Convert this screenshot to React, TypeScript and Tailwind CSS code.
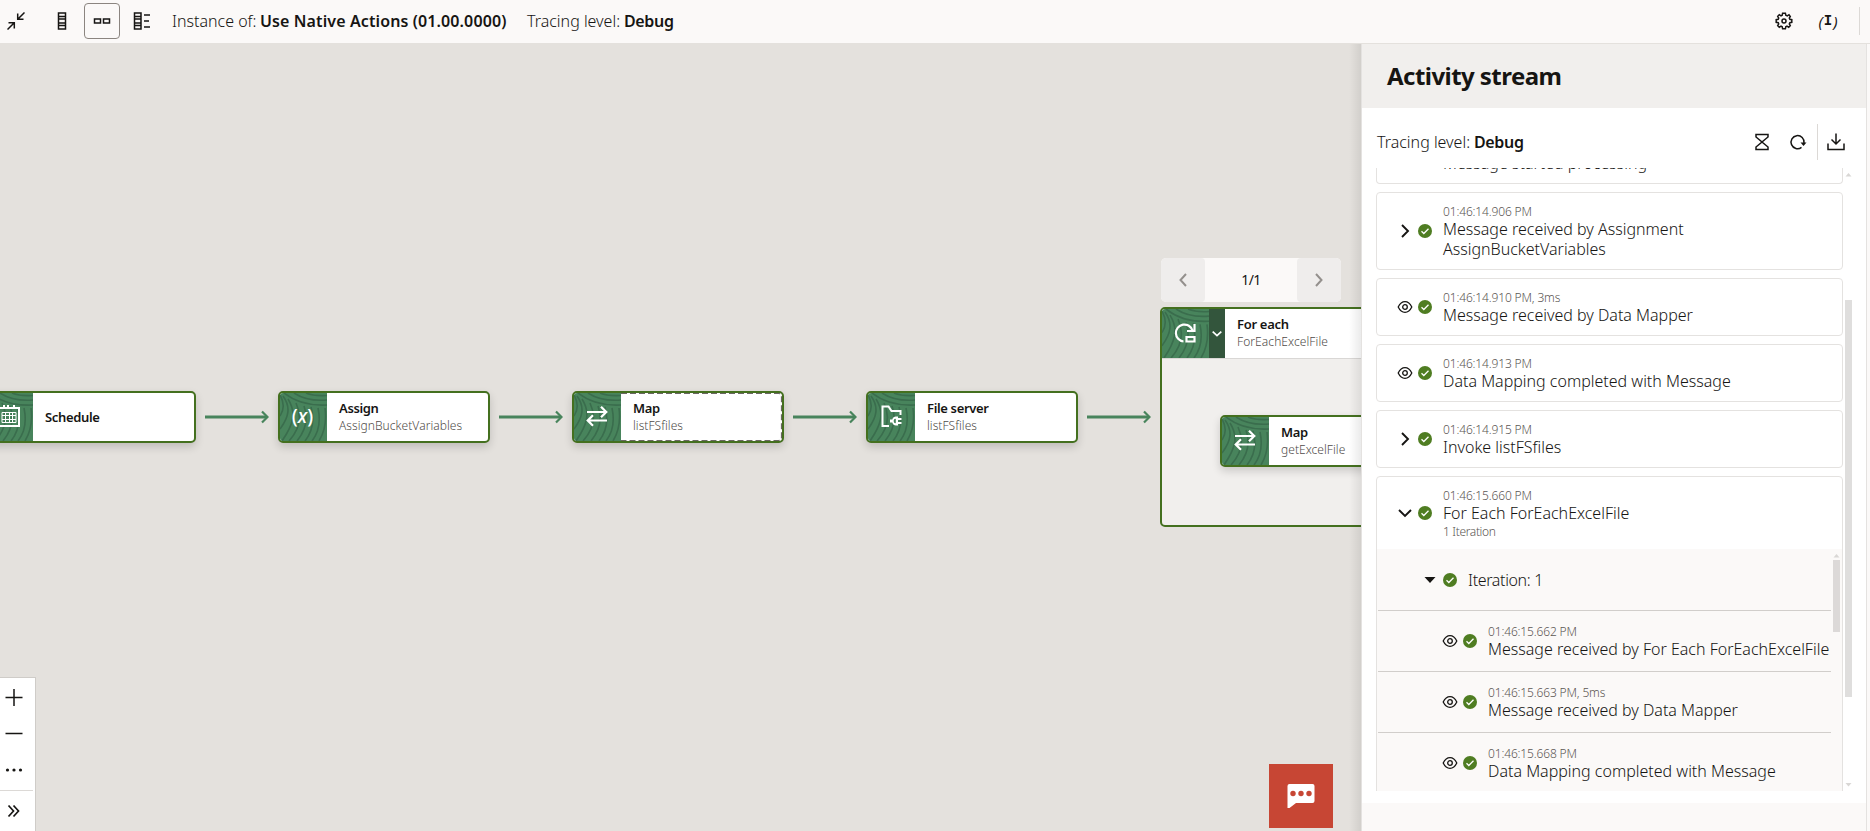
import type { ReactNode } from "react";

function Texture() {
  return (
    <svg className="absolute inset-0 h-full w-full" viewBox="0 0 47 48" preserveAspectRatio="none" fill="none" stroke="#3a6d4d" strokeWidth="1.6">
      <path d="M4 0C14 8 28 13 47 12" />
      <path d="M14 0C23 6 34 8 47 7" />
      <path d="M26 0C33 3 39 3 47 2.500" />
      <path d="M0 2C4 9 4 17 0 23" />
      <path d="M3 3C11 14 9 24 0 36" />
      <path d="M8 6C17 20 13 32 2 48" />
      <path d="M16 10C23 25 19 37 9 48" />
      <path d="M24 13C29 27 25 38 17 48" />
      <path d="M31 14C35 28 32 39 25 48" />
      <path d="M38 15C41 29 39 39 32 48" />
      <path d="M45 15C47 30 44 40 39 48" />
    </svg>
  );
}

function IconTile({ children }: { children: ReactNode }) {
  return (
    <div className="relative flex w-[47px] shrink-0 items-center justify-center bg-[#48845c]">
      <Texture />
      <div className="relative -top-px -left-px flex">{children}</div>
    </div>
  );
}

function MapIcon() {
  return (
    <svg width="24" height="24" viewBox="0 0 24 24" fill="none" stroke="#fff" strokeWidth="2.200">
      <path d="M2 8H21M16 2.700L21.300 8L16 13.300M22 16.500H3M8 11.200L2.700 16.500L8 21.800" />
    </svg>
  );
}

function CalendarIcon() {
  return (
    <svg width="24" height="24" viewBox="0 0 24 24" fill="none" stroke="#fff">
      <path d="M2 4H22V22H2ZM7 1V5M11 1V5M17 1V5" strokeWidth="2" />
      <path d="M5 8.500H19V18.500H5ZM5 11.500H19M5 15.500H19M8.500 8V19M12.500 8V19M15.500 8V19" />
    </svg>
  );
}

function FolderIcon() {
  return (
    <svg width="24" height="24" viewBox="0 0 24 24" fill="none" stroke="#fff" strokeWidth="2">
      <path d="M10 22H3.500V2.500H9.500L12.500 7H21.500V11" />
      <path d="M19 12.500V21.500H17A4 4 0 0 1 13.300 18.500H11V15.500H13.300A4 4 0 0 1 17 12.500Z" fill="#fff" stroke="none" />
      <path d="M16.800 14.800A2.200 2.200 0 0 0 16.800 19.200Z" fill="#48845c" stroke="none" />
      <path d="M19 15H22.500M19 19H22.500" strokeWidth="1.800" />
    </svg>
  );
}

function LoopIcon() {
  return (
    <svg width="24" height="24" viewBox="0 0 24 24" fill="none" stroke="#fff" strokeWidth="2.200">
      <path d="M10.500 20.500A8.500 8.500 0 1 1 19.500 9.500M21.500 3V10H14" />
      <path d="M13.500 16H21.500V20.500H13.500Z" />
    </svg>
  );
}

function Arrow() {
  return (
    <svg className="mx-[9px] shrink-0" width="64" height="14" viewBox="0 0 64 14" fill="none" stroke="#48845c">
      <path d="M0 7H62" strokeWidth="3" />
      <path d="M57 1.500L62.500 7L57 12.500" strokeWidth="2.200" />
    </svg>
  );
}

function Node({ icon, title, sub, dashed }: { icon: ReactNode; title: string; sub?: string; dashed?: boolean }) {
  return (
    <div className="flex h-[52px] w-[212px] shrink-0 overflow-hidden rounded-[5px] border-2 border-[#44701f] bg-white shadow-[0_4px_8px_rgba(0,0,0,0.16)]">
      <IconTile>{icon}</IconTile>
      <div className="relative flex flex-1 flex-col justify-center pl-3">
        {dashed && (
          <svg className="absolute inset-0 h-full w-full" viewBox="0 0 161 48" fill="none" stroke="#6b6663" strokeDasharray="6 3">
            <path d="M0 0.500H157.500Q160.500 0.500 160.500 3.500V44.500Q160.500 47.500 157.500 47.500H0" strokeWidth="1.200" />
          </svg>
        )}
        <div className="text-[13px] leading-[18px] font-semibold tracking-[-0.35px] text-[#161513]">{title}</div>
        {sub && <div className="text-[12px] leading-[18px] font-light tracking-[0.05px] text-[#4f4b48]">{sub}</div>}
      </div>
    </div>
  );
}

function Check() {
  return (
    <svg className="shrink-0" width="14" height="14" viewBox="0 0 14 14" fill="none">
      <circle cx="7" cy="7" r="7" fill="#4f7d22" />
      <path d="M3.500 7.300L5.800 9.500L10.500 4.700" stroke="#fff" strokeWidth="1.300" />
    </svg>
  );
}

function Eye() {
  return (
    <svg className="shrink-0" width="16" height="14" viewBox="0 0 16 14" fill="none" stroke="#161513" strokeWidth="1.300">
      <path d="M1.200 7C3 3.300 5.200 1.700 8 1.700S13 3.300 14.800 7C13 10.700 10.800 12.300 8 12.300S3 10.700 1.200 7Z" />
      <circle cx="8" cy="7" r="2.300" />
    </svg>
  );
}

function Chevron({ down }: { down?: boolean }) {
  return (
    <svg className="shrink-0" width="16" height="14" viewBox="0 0 16 14" fill="none" stroke="#161513" strokeWidth="1.900">
      <path d={down ? "M2 4L8 10L14 4" : "M5 1L11 7L5 13"} />
    </svg>
  );
}

type Kind = "eye" | "right" | "down";

function Entry({ kind, time, lines, note }: { kind: Kind; time: string; lines: string[]; note?: string }) {
  return (
    <div className="flex items-center">
      {kind === "eye" ? <Eye /> : <Chevron down={kind === "down"} />}
      <div className="ml-[5px] flex">
        <Check />
      </div>
      <div className="ml-[11px] whitespace-nowrap">
        <div className="h-4 pt-px text-[12px] leading-4 font-light tracking-[-0.15px] text-[#5b5653]">{time}</div>
        {lines.map((l) => (
          <div key={l} className="text-[16px] leading-5 font-light text-[#161513]">
            {l}
          </div>
        ))}
        {note && <div className="h-4 pt-px text-[12px] leading-4 font-light tracking-[-0.35px] text-[#5b5653]">{note}</div>}
      </div>
    </div>
  );
}

function Card({ children }: { children: ReactNode }) {
  return <div className="rounded-[4px] border border-[#e4e2e0] py-[10px] pl-5">{children}</div>;
}

function Triangle({ up }: { up?: boolean }) {
  return (
    <svg width="7" height="4" viewBox="0 0 7 4" fill="#d9d7d5">
      <path d={up ? "M3.500 0L6.500 3.500H0.500Z" : "M0.500 0H6.500L3.500 3.500Z"} />
    </svg>
  );
}

const steps = [
  { time: "01:46:15.662 PM", text: "Message received by For Each ForEachExcelFile" },
  { time: "01:46:15.663 PM, 5ms", text: "Message received by Data Mapper" },
  { time: "01:46:15.668 PM", text: "Data Mapping completed with Message" },
];

function TopBar() {
  return (
    <header className="flex h-11 shrink-0 items-center border-b border-[#e4e1dd] bg-[#fbf9f8] pb-px text-[#161513]">
      <svg className="ml-[7px]" width="18" height="18" viewBox="0 0 18 18" fill="none" stroke="#161513" strokeWidth="1.500">
        <path d="M17.500 0.500L11 7M10.700 1.500V7.300H16.500M0.500 17.500L7.500 10.500M1.500 10.700H7.300V16.500" />
      </svg>
      <svg className="ml-[32px]" width="10" height="18" viewBox="0 0 10 18" fill="none" stroke="#161513" strokeWidth="1.500">
        <path d="M1.500 1H8.500V4.500H1.500ZM1.500 7H8.500V11H1.500ZM1.500 13.500H8.500V17H1.500ZM1.500 4V14M8.500 4V14" />
      </svg>
      <div className="ml-[17px] flex size-9 items-center justify-center rounded-[4px] border border-[#8b8580]">
        <svg width="18" height="6" viewBox="0 0 18 6" fill="none" stroke="#161513" strokeWidth="1.500">
          <path d="M1.500 1H7.500V5H1.500ZM10.500 1H16.500V5H10.500Z" />
        </svg>
      </div>
      <svg className="ml-[13px]" width="18" height="18" viewBox="0 0 18 18" fill="none" stroke="#161513" strokeWidth="1.500">
        <path d="M1.500 1H8V4.500H1.500ZM1.500 7H8V11H1.500ZM1.500 13.500H8V17H1.500ZM1.500 4V14M8 4V14M11 3H17M11 9H16M11 15H17" />
      </svg>
      <div className="ml-[21px] flex text-[16px] leading-5 font-light whitespace-nowrap">
        <div className="w-[88px]">Instance of:</div>
        <div className="w-[267px] font-semibold tracking-[0.11px]">Use Native Actions (01.00.0000)</div>
        <div className="w-[97px]">Tracing level:</div>
        <div className="font-semibold tracking-[-0.35px]">Debug</div>
      </div>
      <div className="mr-[10px] ml-auto flex items-center">
        <svg width="18" height="18" viewBox="0 0 18 18" fill="none" stroke="#161513" strokeWidth="1.500">
          <path d="M7.600 1.200H10.400L10.800 3.300L12.300 3.900L14 2.700L15.300 4.500L14.300 6L14.900 7.300L16.800 7.700V10.300L14.900 10.700L14.300 12L15.300 13.700L13.700 15.300L12 14.200L10.800 14.800L10.400 16.800H7.600L7.200 14.800L6 14.200L4.300 15.300L2.700 13.700L3.700 12L3.200 10.700L1.200 10.300V7.700L3.200 7.300L3.700 6L2.700 4.300L4.300 2.700L6 3.800L7.200 3.300Z" />
          <circle cx="9" cy="9" r="2" />
        </svg>
        <div className="ml-[25px] flex w-5 items-center justify-center text-[15px] leading-4">
          <i>(</i>
          <span className="mx-px font-[Liberation_Mono] text-[14px] font-bold">I</span>
          <i>)</i>
        </div>
        <div className="ml-[21px] h-7 w-px bg-[#dcd9d6]" />
      </div>
    </header>
  );
}

function Canvas() {
  return (
    <main className="relative min-w-0 flex-1 overflow-hidden bg-[#e4e1dd]">
      <div className="-ml-4 flex items-start pt-[214px]">
        <div className="flex items-center pt-[133px]">
          <Node icon={<CalendarIcon />} title="Schedule" />
          <Arrow />
          <Node
            icon={
              <span className="text-[19px] leading-6 font-medium text-white">
                (<i>x</i>)
              </span>
            }
            title="Assign"
            sub="AssignBucketVariables"
          />
          <Arrow />
          <Node icon={<MapIcon />} title="Map" sub="listFSfiles" dashed />
          <Arrow />
          <Node icon={<FolderIcon />} title="File server" sub="listFSfiles" />
          <Arrow />
        </div>
        <div className="w-[330px] shrink-0">
          <div className="mb-[5px] ml-px flex h-11 w-[180px] overflow-hidden rounded-[5px] bg-[#fbf9f8]">
            <div className="flex w-11 items-center justify-center rounded-[4px] bg-[#efedec]">
              <svg width="8" height="14" viewBox="0 0 8 14" fill="none" stroke="#94908d" strokeWidth="2">
                <path d="M7 1L1.500 7L7 13" />
              </svg>
            </div>
            <div className="flex flex-1 items-center justify-center pb-px text-[14px] tracking-[-0.5px] text-[#161513]">1/1</div>
            <div className="flex w-11 items-center justify-center rounded-[4px] bg-[#efedec]">
              <svg width="8" height="14" viewBox="0 0 8 14" fill="none" stroke="#94908d" strokeWidth="2">
                <path d="M1 1L6.500 7L1 13" />
              </svg>
            </div>
          </div>
          <div className="h-[220px] overflow-hidden rounded-[5px] border-2 border-[#44701f] bg-[#f1efed]">
            <div className="flex h-[50px] border-b border-[#d9d7d5] bg-white">
              <IconTile>
                <LoopIcon />
              </IconTile>
              <div className="flex w-4 items-center justify-center bg-[#33553c]">
                <svg width="10" height="6" viewBox="0 0 10 6" fill="none" stroke="#fff" strokeWidth="1.700">
                  <path d="M0.700 0.700L5 4.700L9.300 0.700" />
                </svg>
              </div>
              <div className="flex flex-col justify-center pb-px pl-3">
                <div className="text-[13px] leading-[18px] font-semibold tracking-[-0.3px] text-[#161513]">For each</div>
                <div className="text-[12px] leading-[18px] font-light tracking-[0.08px] text-[#4f4b48]">ForEachExcelFile</div>
              </div>
            </div>
            <div className="pt-[56px] pl-[58px]">
              <Node icon={<MapIcon />} title="Map" sub="getExcelFile" />
            </div>
          </div>
        </div>
      </div>

      <div className="absolute bottom-0 left-0 h-[154px] w-9 border-t border-r border-[#cfccc8] bg-white">
        <svg width="35" height="153" viewBox="0 0 35 153" fill="none" stroke="#161513">
          <path d="M5.500 19.500H22.500M14 11V28M5.500 55.500H22.500" strokeWidth="1.500" />
          <path d="M0 112.500H33" stroke="#dcd9d6" />
          <path d="M8.500 127.500L13.500 133L8.500 138.500M13.500 127.500L18.500 133L13.500 138.500" strokeWidth="1.700" />
          <g fill="#161513" stroke="none">
            <circle cx="7.500" cy="92" r="1.600" />
            <circle cx="14" cy="92" r="1.600" />
            <circle cx="20.500" cy="92" r="1.600" />
          </g>
        </svg>
      </div>

      <div className="absolute right-[28px] bottom-[3px] flex size-16 items-center justify-center bg-[#c74634]">
        <svg width="28" height="26" viewBox="0 0 28 26">
          <path d="M2.500 1H25.500Q27.500 1 27.500 3V18Q27.500 20 25.500 20H9L2.500 25H0.500V3Q0.500 1 2.500 1Z" fill="#fff" />
          <g fill="#c74634">
            <circle cx="6" cy="10.500" r="2.700" />
            <circle cx="14" cy="10.500" r="2.700" />
            <circle cx="22" cy="10.500" r="2.700" />
          </g>
        </svg>
      </div>
      <div className="absolute inset-y-0 right-0 w-3 bg-linear-to-r from-transparent to-black/8" />
    </main>
  );
}

function ActivityPanel() {
  return (
    <aside className="flex w-[506px] shrink-0 flex-col border-x border-[#e4e2e0] bg-white">
      <h2 className="flex h-16 shrink-0 items-center bg-[#f1efed] pl-[25px] text-[24px] leading-8 font-bold tracking-[-0.55px] text-[#161513]">Activity stream</h2>
      <div className="flex h-[60px] shrink-0 items-center pt-[7px] pl-[15px] text-[16px] leading-5 font-light text-[#161513]">
        <div className="w-[97px] whitespace-nowrap">Tracing level:</div>
        <div className="font-semibold tracking-[-0.35px]">Debug</div>
        <div className="mr-[21px] ml-auto flex items-center">
          <svg width="16" height="18" viewBox="0 0 16 18" fill="none" stroke="#161513" strokeWidth="1.500">
            <path d="M2 1.500H14V4L8 9L14 14V16.500H2V14L8 9L2 4Z" />
          </svg>
          <svg className="ml-[19px]" width="18" height="18" viewBox="0 0 18 18" fill="none" stroke="#161513" strokeWidth="1.500">
            <path d="M12.500 14.300A6.500 6.500 0 1 1 15 10" />
            <path d="M11.500 9.500H17.500L14.500 13Z" fill="#161513" stroke="none" />
          </svg>
          <div className="ml-[10px] h-9 w-px bg-[#dcd9d6]" />
          <svg className="ml-[9px]" width="18" height="18" viewBox="0 0 18 18" fill="none" stroke="#161513" strokeWidth="1.500">
            <path d="M9 0.500V11M4.500 6.500L9 11L13.500 6.500M1 10.500V16.500H17V10.500" />
          </svg>
        </div>
      </div>
      <div className="flex h-[623px] shrink-0 pl-[14px]">
        <div className="flex h-full w-[467px] flex-col justify-start overflow-hidden">
          <div className="flex shrink-0 flex-col gap-2">
            <div className="flex h-4 items-end rounded-b-[4px] border border-t-0 border-[#e4e2e0] pb-[10px] pl-[66px]">
              <div className="text-[16px] leading-5 font-light whitespace-nowrap text-[#161513]">Message started processing</div>
            </div>
            <Card>
              <Entry kind="right" time="01:46:14.906 PM" lines={["Message received by Assignment", "AssignBucketVariables"]} />
            </Card>
            <Card>
              <Entry kind="eye" time="01:46:14.910 PM, 3ms" lines={["Message received by Data Mapper"]} />
            </Card>
            <Card>
              <Entry kind="eye" time="01:46:14.913 PM" lines={["Data Mapping completed with Message"]} />
            </Card>
            <Card>
              <Entry kind="right" time="01:46:14.915 PM" lines={["Invoke listFSfiles"]} />
            </Card>
            <div className="rounded-[4px] border border-[#e4e2e0]">
              <div className="py-[10px] pl-5">
                <Entry kind="down" time="01:46:15.660 PM" lines={["For Each ForEachExcelFile"]} note="1 Iteration" />
              </div>
              <div className="flex h-[280px] bg-[#fbf9f8] pl-px">
                <div className="w-[453px]">
                  <div className="flex h-[62px] items-center border-b border-[#d1cecb] pl-[46px]">
                    <svg width="12" height="6" viewBox="0 0 12 6" fill="#161513">
                      <path d="M0.500 0H11.500L6 6Z" />
                    </svg>
                    <div className="ml-[7px] flex">
                      <Check />
                    </div>
                    <div className="ml-[11px] text-[16px] leading-5 font-light tracking-[-0.35px] text-[#161513]">Iteration: 1</div>
                  </div>
                  {steps.map((s) => (
                    <div key={s.time} className="flex h-[61px] items-center border-b border-[#d1cecb] pl-[64px]">
                      <Entry kind="eye" time={s.time} lines={[s.text]} />
                    </div>
                  ))}
                </div>
                <div className="ml-[2px] flex w-[7px] flex-col pt-[5px]">
                  <Triangle up />
                  <div className="mt-[2px] h-[72px] bg-[#dcd9d8]" />
                </div>
              </div>
            </div>
          </div>
        </div>
        <div className="ml-[2px] flex w-[7px] flex-col pt-[5px]">
          <Triangle up />
          <div className="mt-[123px] h-[397px] bg-[#dfdedd]" />
          <div className="mt-[86px] flex">
            <Triangle />
          </div>
        </div>
      </div>
      <div className="mt-3 flex-1 bg-[#fbf9f8]" />
    </aside>
  );
}

export default function App() {
  return (
    <div className="flex h-[831px] w-full flex-col overflow-hidden bg-[#fbf9f8] font-['Noto_Sans',sans-serif]">
      <TopBar />
      <div className="flex min-h-0 flex-1 pr-[3px]">
        <Canvas />
        <ActivityPanel />
      </div>
    </div>
  );
}
